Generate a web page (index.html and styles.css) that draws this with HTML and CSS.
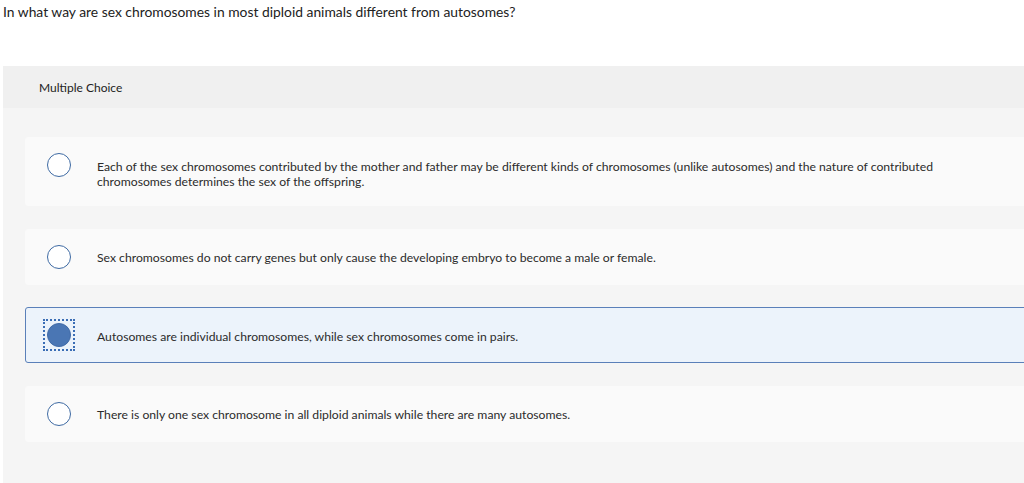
FILE: index.html
```html
<!DOCTYPE html>
<html>
<head>
<meta charset="utf-8">
<link rel="stylesheet" href="styles.css">
</head>
<body>
<div class="page">
  <p class="question">In what way are sex chromosomes in most diploid animals different from autosomes?</p>
  <div class="panel">
    <div class="panel-head">Multiple Choice</div>
    <div class="panel-body">
      <div class="option">
        <span class="radio-wrap"><span class="radio"></span></span>
        <span class="label">Each of the sex chromosomes contributed by the mother and father may be different kinds of chromosomes (unlike autosomes) and the nature of contributed chromosomes determines the sex of the offspring.</span>
      </div>
      <div class="option">
        <span class="radio-wrap"><span class="radio"></span></span>
        <span class="label">Sex chromosomes do not carry genes but only cause the developing embryo to become a male or female.</span>
      </div>
      <div class="option selected">
        <span class="radio-wrap focus"><span class="radio checked"></span></span>
        <span class="label">Autosomes are individual chromosomes, while sex chromosomes come in pairs.</span>
      </div>
      <div class="option">
        <span class="radio-wrap"><span class="radio"></span></span>
        <span class="label">There is only one sex chromosome in all diploid animals while there are many autosomes.</span>
      </div>
    </div>
  </div>
</div>
</body>
</html>
```

FILE: styles.css
```css
html, body {
  margin: 0;
  padding: 0;
  background: #ffffff;
  overflow: hidden;
}
body {
  font-family: "Lato", "Liberation Sans", sans-serif;
  color: #2b2b2b;
}
.page {
  padding-left: 3px;
  width: 1060px;
}
.question {
  margin: 0;
  padding-top: 4px;
  height: 66px;
  box-sizing: border-box;
  font-size: 13.85px;
  line-height: 16px;
  color: #222;
}
.panel {
  background: #f5f5f5;
  min-height: 420px;
}
.panel-head {
  background: #f0f0f0;
  height: 42px;
  box-sizing: border-box;
  padding: 14px 0 0 36px;
  font-size: 12px;
  line-height: 16px;
  color: #222;
}
.panel-body {
  padding: 29px 0 40px 22px;
  display: flex;
  flex-direction: column;
  gap: 22.5px;
}
.option {
  display: flex;
  align-items: flex-start;
  background: #fafafa;
  border: 1px solid #fafafa;
  border-radius: 3px;
  min-height: 56px;
  box-sizing: border-box;
  padding: 20.5px 0 16.5px;
}
.option.selected {
  background: #ecf3fb;
  border-color: #5a80b9;
}
.radio-wrap {
  flex: none;
  width: 32px;
  height: 32px;
  margin: -9.5px 22px -20px 17px;
  display: flex;
  align-items: center;
  justify-content: center;
  box-sizing: border-box;
}
.radio-wrap.focus {
  border: 2px dotted #3a6db5;
}
.radio {
  width: 24px;
  height: 24px;
  border-radius: 50%;
  border: 1.5px solid #3e6aa3;
  background: #fff;
  box-sizing: border-box;
}
.radio.checked {
  background: #4a76b4;
  border-color: #416ba8;
}
.label {
  font-size: 12.2px;
  line-height: 15px;
  color: #2b2b2b;
  padding-right: 120px;
}
```
